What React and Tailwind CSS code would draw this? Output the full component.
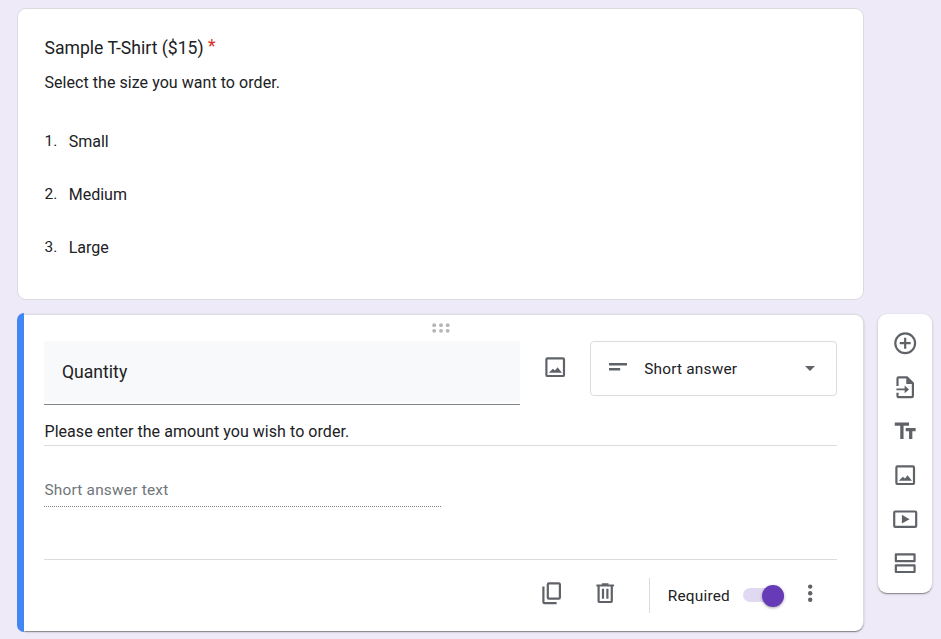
import React from "react";

function Icon({ className = "", children }) {
  return (
    <svg viewBox="0 0 24 24" className={`block size-[26.4px] shrink-0 fill-[#5f6368] ${className}`}>
      {children}
    </svg>
  );
}

function ImageIcon({ className }) {
  return (
    <Icon className={className}>
      <path d="M19 3H5a2 2 0 0 0-2 2v14a2 2 0 0 0 2 2h14a2 2 0 0 0 2-2V5a2 2 0 0 0-2-2zm0 16H5V5h14v14zM14.2 12.1l-2.4 3-1.9-1.7L6.2 17h11.9l-3.9-4.9z" />
    </Icon>
  );
}

const tools = [
  <Icon key="add">
    <path d="M13 7h-2v4H7v2h4v4h2v-4h4v-2h-4V7zm-1-5a10 10 0 1 0 0 20 10 10 0 0 0 0-20zm0 18a8 8 0 1 1 0-16 8 8 0 0 1 0 16z" />
  </Icon>,
  <Icon key="import">
    <path d="M14 2H6a2 2 0 0 0-2 2v7h2V4h7v5h5v11H6v-3H4v3a2 2 0 0 0 2 2h12a2 2 0 0 0 2-2V8l-6-6z" />
    <path d="M4 13.2h7.5v-2.7L15.5 14l-4 3.5v-2.7H4z" />
  </Icon>,
  <Icon key="title">
    <path d="M2.5 4v3h5v12h3V7h5V4h-13zm19 5h-9v3h3v7h3v-7h3V9z" />
  </Icon>,
  <ImageIcon key="image" />,
  <Icon key="video">
    <path d="M21 4H3a2 2 0 0 0-2 2v12a2 2 0 0 0 2 2h18a2 2 0 0 0 2-2V6a2 2 0 0 0-2-2zm0 14H3V6h18v12zM9 8v8l7-4-7-4z" />
  </Icon>,
  <Icon key="section">
    <path fillRule="evenodd" d="M3.5 3h17a1 1 0 0 1 1 1v6.2a1 1 0 0 1-1 1h-17a1 1 0 0 1-1-1V4a1 1 0 0 1 1-1zm1 2v4.2h15V5zM3.5 13h17a1 1 0 0 1 1 1v6a1 1 0 0 1-1 1h-17a1 1 0 0 1-1-1v-6a1 1 0 0 1 1-1zm1 2v4h15v-4z" />
  </Icon>,
];

function SizeQuestion() {
  return (
    <section className="h-[292px] w-[847px] rounded-[9px] border border-[#dadce0] bg-white pt-[26px] pl-[26.5px]">
      <h2 className="flex text-[17.6px] leading-[26px]">
        Sample T-Shirt ($15)
        <span className="-mt-[2px] ml-[4.5px] text-[#d93025]">*</span>
      </h2>
      <p className="mt-[11px] text-[16px] leading-[22px] tracking-[0.05px]">Select the size you want to order.</p>
      <ol className="mt-[21px]">
        {["Small", "Medium", "Large"].map((size, i) => (
          <li key={size} className="flex h-[53px] items-center">
            <span className="mb-[2px] w-[24.2px] text-[15.4px] leading-[20px] tracking-[0.2px]">{i + 1}.</span>
            <span className="text-[16px] leading-[22px]">{size}</span>
          </li>
        ))}
      </ol>
    </section>
  );
}

function QuantityQuestion() {
  return (
    <section className="mt-[13px] flex h-[319px] w-[847px]">
      <div className="z-10 w-[7px] shrink-0 rounded-l-[8px] bg-[#4285f4]" />
      <div className="mt-px h-[317px] w-[840px] rounded-r-[9px] border-t border-r border-[#dadce0] bg-white pl-[20px] shadow-[0_2px_1px_-1px_rgba(0,0,0,0.25),0_1px_1px_0_rgba(0,0,0,0.18),0_1px_3px_0_rgba(0,0,0,0.12)]">
        <div className="flex h-[26px] w-[793px] justify-center pt-[8px]">
          <svg viewBox="0 0 18 10" className="block h-[10px] w-[18px] fill-[#b5b5b5]">
            {[2.2, 9, 15.7].map((x) => (
              <g key={x}>
                <circle cx={x} cy="2.2" r="1.9" />
                <circle cx={x} cy="7.8" r="1.9" />
              </g>
            ))}
          </svg>
        </div>
        <div className="flex w-[793px] items-start">
          <div className="h-[64px] w-[476px] border-b border-[#80868b]">
            <div className="h-[61px] bg-[#f8f9fa] pt-[18px] pl-[18px] text-[17.6px] leading-[26px]">Quantity</div>
          </div>
          <ImageIcon className="mt-[13px] ml-[22.3px]" />
          <div className="ml-auto flex h-[55px] w-[247px] items-center rounded-[4px] border border-[#dadce0]">
            <svg viewBox="0 0 18 8" className="ml-[18px] block h-[8px] w-[18px] -translate-y-[2px] fill-[#5f6368]">
              <path d="M0 0h18v2.6H0zM0 5h11.2v2.6H0z" />
            </svg>
            <span className="ml-[17.2px] text-[15.4px] leading-[22px] tracking-[0.2px]">Short answer</span>
            <svg viewBox="0 0 10 5" className="mr-[21px] ml-auto block h-[5px] w-[10px] fill-[#5f6368]">
              <path d="M0 0h10L5 5z" />
            </svg>
          </div>
        </div>
        <p className="mt-[14px] h-[27px] w-[793px] border-b border-[#dadce0] pt-[2px] pl-[0.5px] text-[16px] leading-[22px] tracking-[0.05px]">
          Please enter the amount you wish to order.
        </p>
        <div className="mt-[33px] h-[28px] w-[397px] border-b border-dotted border-[#80868b] pl-[0.4px] text-[15.4px] leading-[22px] tracking-[0.22px] text-[#70757a]">
          Short answer text
        </div>
        <footer className="mt-[52px] flex w-[793px] border-t border-[#dadce0] pt-[18px]">
          <Icon className="mt-[2px] ml-[495px]">
            <path d="M18 2H9a2 2 0 0 0-2 2v12a2 2 0 0 0 2 2h9a2 2 0 0 0 2-2V4a2 2 0 0 0-2-2zm0 14H9V4h9v12zM3 6v14a2 2 0 0 0 2 2h11v-2H5V6H3z" />
          </Icon>
          <Icon className="mt-[2px] ml-[26.6px]">
            <path d="M15 4V3H9v1H4v2h1v13a2 2 0 0 0 2 2h10a2 2 0 0 0 2-2V6h1V4h-5zm2 15H7V6h10v13zM9 8h2v9H9zM13 8h2v9h-2z" />
          </Icon>
          <div className="ml-[31px] h-[35px] w-px shrink-0 bg-[#dadce0]" />
          <span className="mt-[7px] ml-[17.3px] w-[75px] text-[15.4px] leading-[22px] tracking-[0.22px]">Required</span>
          <div className="mt-[10px] ml-[0.2px] flex h-[14px] w-[41px] items-center justify-end rounded-full bg-[#e1d8f1]">
            <div className="mt-[2px] size-[22px] shrink-0 rounded-full bg-[#673ab7] shadow-[0_1px_3px_rgba(0,0,0,0.35)]" />
          </div>
          <Icon className="mt-[2px] ml-[13.4px]">
            <circle cx="12" cy="6" r="2" />
            <circle cx="12" cy="12" r="2" />
            <circle cx="12" cy="18" r="2" />
          </Icon>
        </footer>
      </div>
    </section>
  );
}

export default function App() {
  return (
    <main className="flex h-[639px] w-[941px] overflow-hidden bg-[#eeeaf7] pt-[8px] pl-[17px] font-[Roboto,sans-serif] text-[#202124]">
      <div className="w-[847px] shrink-0">
        <SizeQuestion />
        <QuantityQuestion />
      </div>
      <aside className="mt-[306px] ml-[13.6px] flex h-[279px] w-[54px] flex-col items-center rounded-[9px] bg-white pt-[7px] shadow-[0_2px_1px_-1px_rgba(0,0,0,0.2),0_1px_1px_0_rgba(0,0,0,0.14),0_1px_3px_0_rgba(0,0,0,0.2)]">
        {tools.map((tool) => (
          <button key={tool.key} className="flex h-[44px] w-full shrink-0 items-center justify-center pl-[1.2px]">
            {tool}
          </button>
        ))}
      </aside>
    </main>
  );
}
